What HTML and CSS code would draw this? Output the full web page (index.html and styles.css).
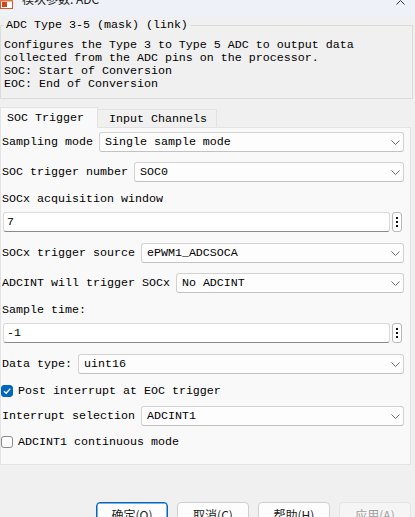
FILE: index.html
```html
<!DOCTYPE html>
<html lang="zh">
<head>
<meta charset="utf-8">
<title>模块参数: ADC</title>
<link rel="stylesheet" href="styles.css">
</head>
<body>
<div class="titlebar">
  <svg class="appicon" viewBox="0 0 13 9" width="13" height="9">
    <rect x="0.5" y="-4" width="12" height="12.5" fill="#fff" stroke="#d9572b"/>
    <rect x="2" y="2" width="5" height="5" fill="#d9401f"/>
    <rect x="0" y="0" width="13" height="1.5" fill="#e3743f"/>
  </svg>
  <span class="title">模块参数: ADC</span>
  <svg class="close" viewBox="0 0 9 5" width="9" height="5">
    <path d="M0.5 4.5 L4.5 0.5 L8.5 4.5" fill="none" stroke="#333" stroke-width="1"/>
  </svg>
</div>

<fieldset class="group">
  <legend>ADC Type 3-5 (mask) (link)</legend>
  <p class="desc">Configures the Type 3 to Type 5 ADC to output data
collected from the ADC pins on the processor.
SOC: Start of Conversion
EOC: End of Conversion</p>
</fieldset>

<div class="tabs">
  <div class="tab active">SOC Trigger</div>
  <div class="tab inactive">Input Channels</div>
</div>

<div class="panel">
  <div class="row first">
    <span class="lbl">Sampling mode</span>
    <div class="select"><span>Single sample mode</span><svg class="chev" viewBox="0 0 9 5"><path d="M0.5 0.5 L4.5 4.5 L8.5 0.5" fill="none" stroke="#6b6b6b"/></svg></div>
  </div>
  <div class="row sp-m">
    <span class="lbl">SOC trigger number</span>
    <div class="select"><span>SOC0</span><svg class="chev" viewBox="0 0 9 5"><path d="M0.5 0.5 L4.5 4.5 L8.5 0.5" fill="none" stroke="#6b6b6b"/></svg></div>
  </div>
  <div class="plain sp-m">SOCx acquisition window</div>
  <div class="inrow sp-s">
    <div class="input">7</div>
    <div class="more"><svg viewBox="0 0 2 10" width="2" height="10"><rect x="0" y="0" width="2" height="2" fill="#111"/><rect x="0" y="4" width="2" height="2" fill="#111"/><rect x="0" y="8" width="2" height="2" fill="#111"/></svg></div>
  </div>
  <div class="row sp-l">
    <span class="lbl">SOCx trigger source</span>
    <div class="select"><span>ePWM1_ADCSOCA</span><svg class="chev" viewBox="0 0 9 5"><path d="M0.5 0.5 L4.5 4.5 L8.5 0.5" fill="none" stroke="#6b6b6b"/></svg></div>
  </div>
  <div class="row sp-m">
    <span class="lbl">ADCINT will trigger SOCx</span>
    <div class="select"><span>No ADCINT</span><svg class="chev" viewBox="0 0 9 5"><path d="M0.5 0.5 L4.5 4.5 L8.5 0.5" fill="none" stroke="#6b6b6b"/></svg></div>
  </div>
  <div class="plain sp-m">Sample time:</div>
  <div class="inrow sp-s">
    <div class="input">-1</div>
    <div class="more"><svg viewBox="0 0 2 10" width="2" height="10"><rect x="0" y="0" width="2" height="2" fill="#111"/><rect x="0" y="4" width="2" height="2" fill="#111"/><rect x="0" y="8" width="2" height="2" fill="#111"/></svg></div>
  </div>
  <div class="row sp-l">
    <span class="lbl">Data type:</span>
    <div class="select"><span>uint16</span><svg class="chev" viewBox="0 0 9 5"><path d="M0.5 0.5 L4.5 4.5 L8.5 0.5" fill="none" stroke="#6b6b6b"/></svg></div>
  </div>
  <div class="check sp-m">
    <span class="box on"><svg viewBox="0 0 10 10" width="10" height="10"><path d="M2 5.2 L4.2 7.3 L8.2 2.8" fill="none" stroke="#fff" stroke-width="1.3"/></svg></span>
    <span>Post interrupt at EOC trigger</span>
  </div>
  <div class="row sp-c">
    <span class="lbl">Interrupt selection</span>
    <div class="select"><span>ADCINT1</span><svg class="chev" viewBox="0 0 9 5"><path d="M0.5 0.5 L4.5 4.5 L8.5 0.5" fill="none" stroke="#6b6b6b"/></svg></div>
  </div>
  <div class="check sp-d">
    <span class="box"></span>
    <span>ADCINT1 continuous mode</span>
  </div>
</div>

<div class="footer">
  <button class="btn focus">确定(O)</button>
  <button class="btn">取消(C)</button>
  <button class="btn">帮助(H)</button>
  <button class="btn disabled">应用(A)</button>
</div>
</body>
</html>
```
FILE: styles.css
```css
* { box-sizing: border-box; }
html, body { margin: 0; height: 517px; overflow: hidden; }
body {
  width: 415px;
  background: #f0f0f0;
  font-family: "Liberation Mono", monospace;
  font-size: 11.67px;
  color: #000;
}
.titlebar {
  height: 17px;
  background: #eef2f8;
  display: flex;
  align-items: flex-start;
  overflow: hidden;
}
.appicon { flex: none; width: 13px; height: 9px; }
.title {
  font-family: "Noto Sans CJK SC", "Noto Sans", sans-serif;
  font-size: 12px;
  line-height: 16px;
  margin-top: -9px;
  margin-left: 9px;
  color: #1a1a1a;
}
.close { margin-left: auto; margin-right: 10px; width: 9px; height: 5px; flex: none; }

.group {
  margin: 2px 2px 0 0;
  padding: 7px 3px 7px 3px;
  border: 1px solid #dcdcdc;
  min-width: 0;
}
.group legend { padding: 0 2px; line-height: 13px; }
.desc { margin: 0; line-height: 13px; white-space: pre; }

.tabs {
  display: flex;
  align-items: flex-end;
  margin-top: 8px;
  height: 20px;
}
.tab {
  display: flex;
  align-items: center;
  border: 1px solid #e3e3e3;
  border-bottom: none;
  line-height: 14px;
}
.tab.active {
  width: 98px;
  height: 21px;
  padding-left: 6px;
  background: #f9f9f9;
  margin-bottom: -1px;
  position: relative;
  z-index: 1;
}
.tab.inactive {
  width: 119px;
  height: 18px;
  padding-left: 11px;
  border-left: none;
  background: #f0f0f0;
}

.panel {
  background: #f9f9f9;
  border: 1px solid #e3e3e3;
  margin-right: 4px;
  padding: 0 6px 15px 1px;
  display: flex;
  flex-direction: column;
}
.row { display: flex; align-items: center; gap: 6px; height: 20px; }
.row.first { margin-top: 4px; }
.sp-s { margin-top: 6px; }
.sp-m { margin-top: 10px; }
.sp-l { margin-top: 11px; }
.sp-c { margin-top: 8px; }
.sp-d { margin-top: 9px; }
.lbl, .plain { white-space: pre; line-height: 14px; }
.plain { height: 14px; }
.select {
  flex: 1;
  height: 20px;
  background: #fdfdfd;
  border: 1px solid #d2d2d2;
  border-bottom-color: #c2c2c2;
  border-radius: 3px;
  display: flex;
  align-items: center;
  padding: 0 3px 0 5px;
}
.chev { margin-left: auto; width: 9px; height: 5px; flex: none; }

.inrow { display: flex; gap: 2px; height: 20px; margin-left: 1px; margin-right: 2px; }
.input {
  flex: 1;
  background: #fff;
  border: 1px solid #dadada;
  border-bottom-color: #8a8a8a;
  border-radius: 3px;
  padding-left: 3px;
  display: flex;
  align-items: center;
}
.more {
  width: 10px;
  background: #fff;
  border: 1px solid #b8b8b8;
  border-radius: 3px;
  display: flex;
  align-items: center;
  justify-content: center;
}
.check { display: flex; align-items: center; gap: 5px; height: 14px; margin-left: -1px; line-height: 14px; }
.box {
  width: 12px;
  height: 12px;
  border: 1px solid #8a8a8a;
  border-radius: 3px;
  background: #fff;
  display: flex;
  align-items: center;
  justify-content: center;
  flex: none;
}
.box.on { background: #0067c0; border-color: #0067c0; }

.footer {
  margin-top: 37px;
  display: flex;
  justify-content: flex-end;
  gap: 9px;
  padding-right: 4px;
}
.btn {
  width: 72px;
  height: 24px;
  padding: 0;
  background: #fdfdfd;
  border: 1px solid #d0d0d0;
  border-radius: 4px;
  font-family: "Noto Sans CJK SC", "Noto Sans", sans-serif;
  font-size: 12px;
  color: #1a1a1a;
}
.btn.focus { border-color: #0067c0; box-shadow: inset 0 0 0 0.5px #0067c0; }
.btn.disabled { background: #f5f5f5; border-color: #e5e5e5; color: #a0a0a0; }
```
